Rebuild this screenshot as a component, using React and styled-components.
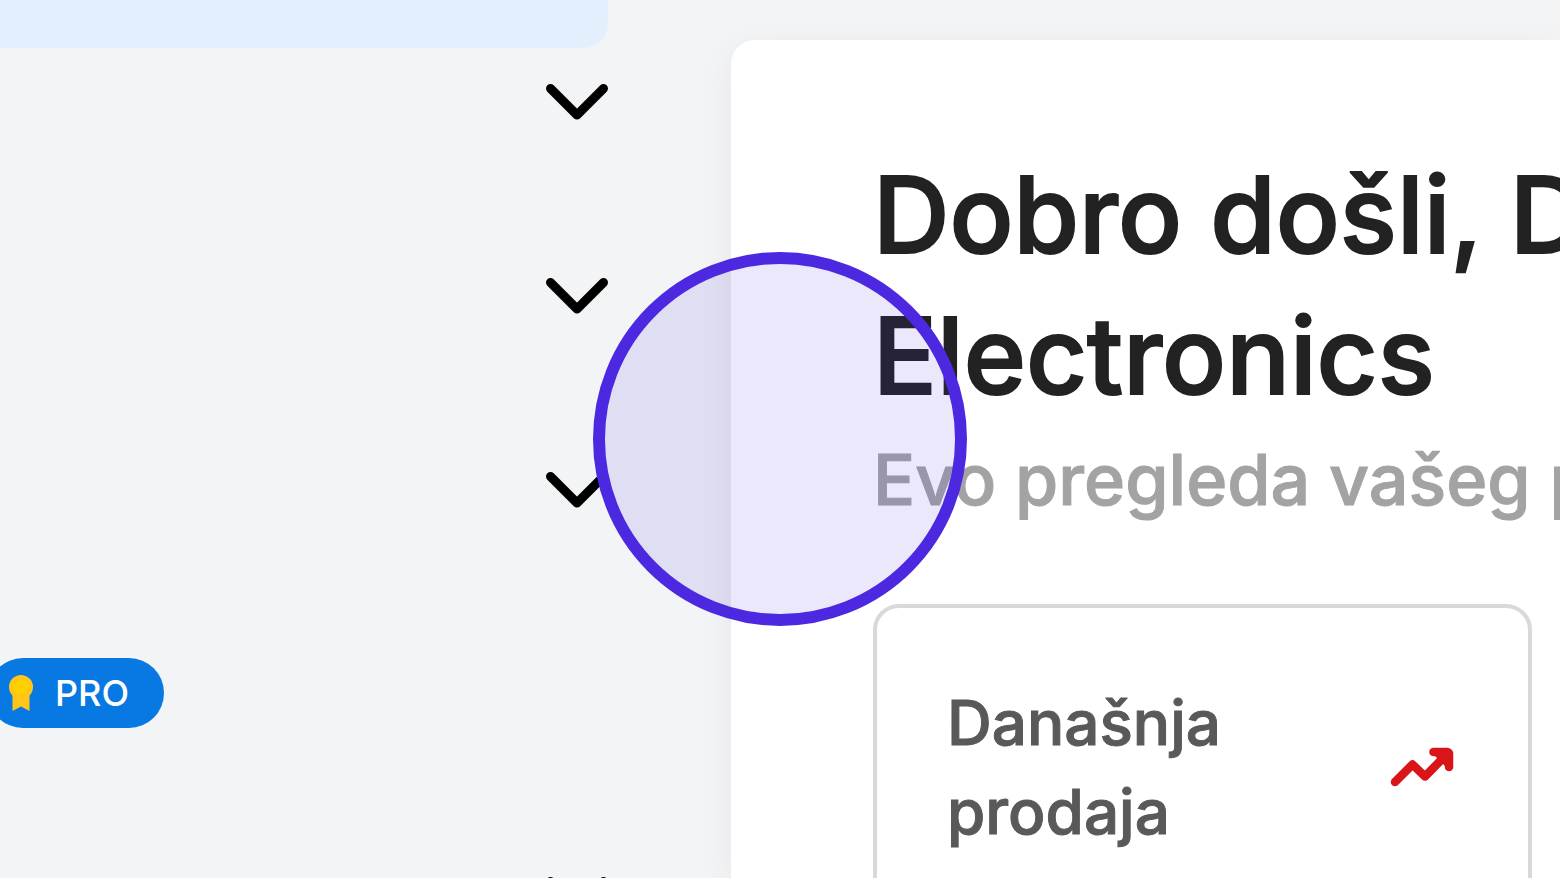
import React from 'react';
import styled, { createGlobalStyle } from 'styled-components';

const GlobalStyle = createGlobalStyle`
  * {
    box-sizing: border-box;
  }

  body {
    margin: 0;
    background: #f2f4f6;
    font-family: Inter, "Liberation Sans", sans-serif;
  }

  h1, h2, p, ul {
    margin: 0;
    padding: 0;
  }
`;

const Page = styled.div`
  display: flex;
  gap: 123px;
  height: 100vh;
  overflow: hidden;
`;

const Sidebar = styled.nav`
  flex: 0 0 608px;
`;

const ActiveItem = styled.div`
  height: 48px;
  border-radius: 0 0 24px 0;
  background: #e3effc;
`;

const Menu = styled.ul`
  display: flex;
  flex-direction: column;
  gap: 86px;
  list-style: none;
`;

const MenuItem = styled.li`
  display: flex;
  align-items: center;
  justify-content: ${({ $start }) => ($start ? 'flex-start' : 'flex-end')};
  height: ${({ $start }) => ($start ? '125px' : '108px')};
`;

const ToggleButton = styled.button`
  display: flex;
  padding: 0;
  border: 0;
  background: none;
  cursor: pointer;
`;

const ProBadge = styled.span`
  display: flex;
  align-items: center;
  gap: 22px;
  height: 70px;
  margin-left: -12px;
  padding: 0 35px 0 21px;
  border-radius: 35px;
  background: #0878e2;
  color: #fff;
  font-size: 36px;
  font-weight: 500;
`;

const Panel = styled.main`
  flex: 1;
  min-width: 0;
  margin-top: 40px;
  padding: 104px 28px 0 142px;
  border-radius: 24px 0 0 0;
  background: #fff;
  box-shadow: 0 9px 36px rgba(0, 0, 0, 0.06);
`;

const Title = styled.h1`
  color: #222;
  font-size: 106px;
  font-weight: 500;
  line-height: 141px;
  white-space: nowrap;
  -webkit-text-stroke: 2px #222;
`;

const Subtitle = styled.p`
  color: #a3a3a3;
  font-size: 70px;
  font-weight: 500;
  line-height: 108px;
  white-space: nowrap;
  -webkit-text-stroke: 1px #a3a3a3;
`;

const Card = styled.section`
  display: flex;
  align-items: center;
  justify-content: space-between;
  margin-top: 70px;
  padding: 70px 74px 70px 70px;
  border: 4px solid #d9d9d9;
  border-radius: 26px;
`;

const CardTitle = styled.h2`
  color: #595959;
  font-size: 62px;
  font-weight: 500;
  line-height: 89px;
  -webkit-text-stroke: 1px #595959;
`;

const Spotlight = styled.div`
  position: fixed;
  top: 50%;
  left: 50%;
  width: 374px;
  height: 374px;
  border: 12px solid #4c28e1;
  border-radius: 50%;
  background: rgba(86, 46, 220, 0.11);
  background-clip: padding-box;
  transform: translate(-50%, -50%);
  pointer-events: none;
`;

const Chevron = () => (
    <svg width="62" height="36" viewBox="0 0 62 36" fill="none" aria-hidden="true">
        <path d="M4.5 4.5 31 31 57.5 4.5" stroke="#000" strokeWidth="9" strokeLinecap="round" strokeLinejoin="round" />
    </svg>
);

const Ribbon = () => (
    <svg width="24" height="36" viewBox="0 0 24 36" fill="#ffc61a" aria-hidden="true">
        <path d="M3.5 19h17v17L12 31.500 3.500 36Z" />
        <circle cx="12" cy="12" r="12" />
        <circle cx="12" cy="12" r="8" fill="#ffd000" />
    </svg>
);

const TrendUp = () => (
    <svg width="64" height="40" viewBox="0 0 64 40" fill="none" aria-hidden="true">
        <g stroke="#d91519" strokeWidth="8.500" strokeLinecap="round" strokeLinejoin="round">
            <path d="M5 35 22.500 17.500 35 29.500 57 7" />
            <path d="M43.500 5H57Q59 5 59 7V20" />
        </g>
        <path d="M42 6H59V23Z" fill="#d91519" />
    </svg>
);

const MenuToggle = () => (
    <MenuItem>
        <ToggleButton type="button" aria-label="Proširi">
            <Chevron />
        </ToggleButton>
    </MenuItem>
);

const App = () => {
    return (
        <>
            <GlobalStyle />
            <Page>
                <Sidebar>
                    <ActiveItem />
                    <Menu>
                        <MenuToggle />
                        <MenuToggle />
                        <MenuToggle />
                        <MenuItem $start>
                            <ProBadge>
                                <Ribbon />
                                PRO
                            </ProBadge>
                        </MenuItem>
                        <MenuToggle />
                    </Menu>
                </Sidebar>
                <Panel>
                    <Title>
                        Dobro došli, D
                        <br />
                        Electronics
                    </Title>
                    <Subtitle>Evo pregleda vašeg p</Subtitle>
                    <Card>
                        <CardTitle>
                            Današnja
                            <br />
                            prodaja
                        </CardTitle>
                        <TrendUp />
                    </Card>
                </Panel>
            </Page>
            <Spotlight />
        </>
    );
}

export default App;
